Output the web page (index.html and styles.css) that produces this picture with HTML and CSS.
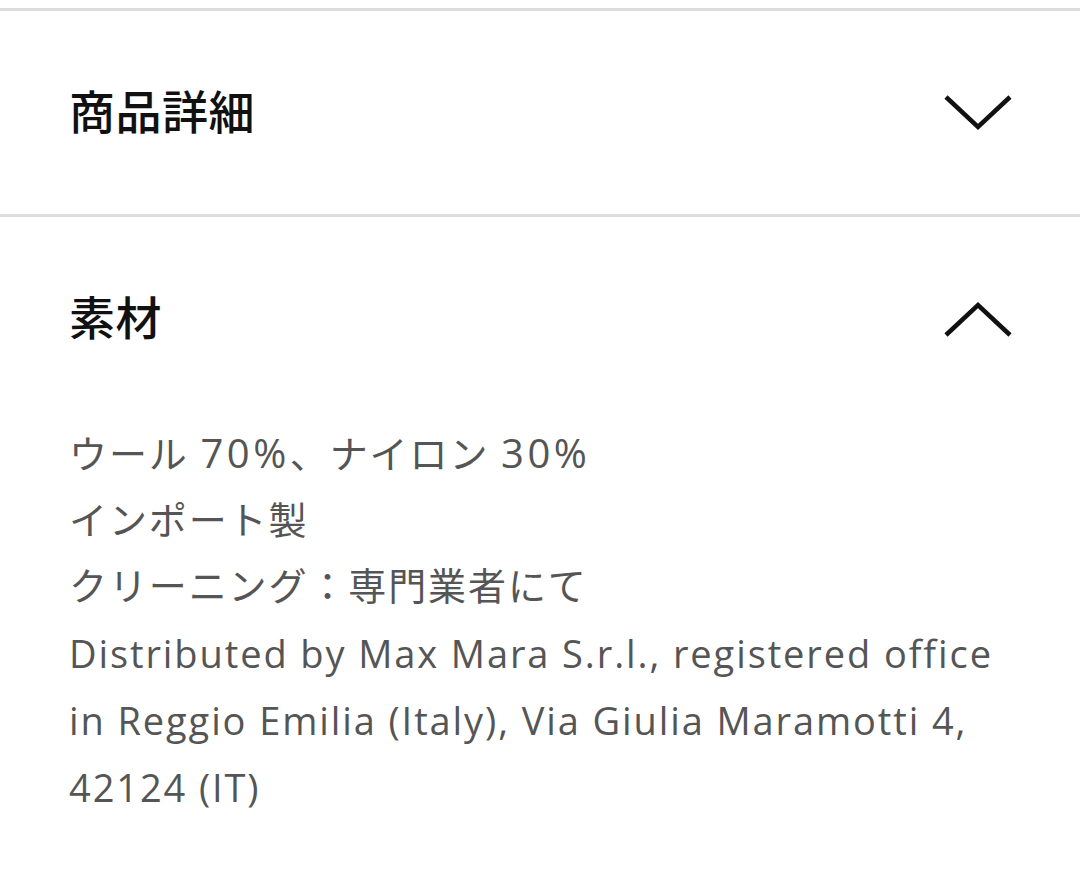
FILE: index.html
```html
<!DOCTYPE html>
<html lang="ja">
<head>
<meta charset="utf-8">
<link rel="stylesheet" href="styles.css">
</head>
<body>
<div class="accordion">
  <section class="item">
    <div class="item-header">
      <h2 class="item-title">商品詳細</h2>
      <svg class="chevron" viewBox="0 0 68 36" width="68" height="36"><polyline points="2,2 34,32 66,2" fill="none" stroke="#111" stroke-width="4.5"/></svg>
    </div>
  </section>
  <section class="item item-open">
    <div class="item-header">
      <h2 class="item-title">素材</h2>
      <svg class="chevron" viewBox="0 0 68 36" width="68" height="36"><polyline points="2,34 34,4 66,34" fill="none" stroke="#111" stroke-width="4.5"/></svg>
    </div>
    <div class="item-body">
      <p>ウール <span class="num">70%</span>、ナイロン <span class="num">30%</span></p>
      <p>インポート製</p>
      <p>クリーニング：専門業者にて</p>
      <p class="latin">Distributed by Max Mara S.r.l., registered office in Reggio Emilia (Italy), Via Giulia Maramotti 4, 42124 (IT)</p>
    </div>
  </section>
</div>
</body>
</html>
```
FILE: styles.css
```css
html, body {
  margin: 0;
  padding: 0;
  background: #fff;
}
body {
  font-family: "Open Sans", "Noto Sans CJK JP", sans-serif;
  width: 1080px;
  height: 873px;
  overflow: hidden;
}
.accordion {
  margin-top: 8px;
  border-top: 3px solid #dcdcdc;
}
.item {
  border-bottom: 3px solid #dcdcdc;
}
.item-open {
  border-bottom: none;
}
.item-header {
  height: 203px;
  display: flex;
  align-items: center;
  justify-content: space-between;
  padding: 0 68px 0 69px;
}
.item-title {
  margin: 0 0 8px;
  font-family: "Noto Sans CJK JP", sans-serif;
  font-size: 46px;
  font-weight: 500;
  letter-spacing: 0.5px;
  color: #111;
}
.chevron {
  display: block;
}
.item-body {
  padding: 0 60px 0 69px;
  color: #555;
  font-size: 38px;
  letter-spacing: 1.9px;
  line-height: 66px;
}
.item-body p {
  margin: 0;
}
.item-body .num {
  font-size: 40px;
  letter-spacing: 3.5px;
}
.item-body .latin {
  margin-top: 2px;
  line-height: 67px;
}
```
